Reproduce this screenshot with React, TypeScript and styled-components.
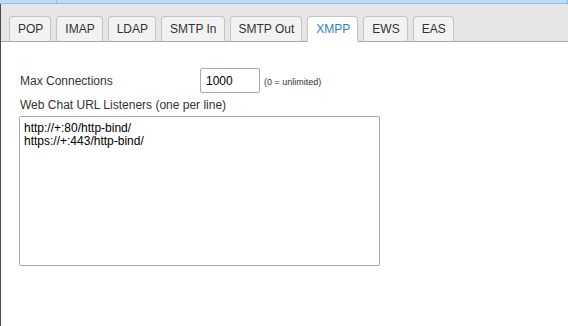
import styled, { createGlobalStyle } from "styled-components";

const GlobalStyle = createGlobalStyle`
  html, body {
    margin: 0;
    padding: 0;
    background: #ffffff;
    font-family: Arial, "Liberation Sans", sans-serif;
  }
`;

const Page = styled.div`
  width: 568px;
  height: 326px;
  display: flex;
  flex-direction: column;
  overflow: hidden;
`;

const TopStrip = styled.div`
  height: 3px;
  display: flex;
  background: #b9dcf8;
  border-bottom: 1px solid #8fc0ea;
`;

const StripCell = styled.div<{ $width?: number }>`
  width: ${(p) => (p.$width ? `${p.$width}px` : "auto")};
  flex: ${(p) => (p.$width ? "none" : "1")};
  border-right: 1px solid #8fc0ea;
`;

const Body = styled.div`
  flex: 1;
  display: flex;
  flex-direction: column;
  border-left: 1px solid #4a4a4a;
`;

const TabBar = styled.div`
  height: 37px;
  display: flex;
  align-items: flex-end;
  gap: 5px;
  padding-left: 8px;
  background: #e6e6e6;
  border-bottom: 1px solid #a6a6a6;
`;

const Tab = styled.div<{ $active?: boolean }>`
  height: 24px;
  display: flex;
  align-items: center;
  padding: 0 7px 0 8px;
  margin-bottom: -1px;
  font-size: 12px;
  color: ${(p) => (p.$active ? "#2b7fd2" : "#333333")};
  background: ${(p) => (p.$active ? "#ffffff" : "#f2f2f2")};
  border: 1px solid #c4c4c4;
  border-bottom: 1px solid ${(p) => (p.$active ? "#ffffff" : "#a6a6a6")};
  border-radius: 4px 4px 0 0;
`;

const Content = styled.div`
  display: flex;
  flex-direction: column;
  padding: 26px 0 0 18px;
`;

const Row = styled.div`
  display: flex;
  align-items: center;
  height: 25px;
`;

const Label = styled.label`
  width: 180px;
  padding-left: 1px;
  font-size: 12px;
  color: #333333;
`;

const NumberInput = styled.input`
  box-sizing: border-box;
  width: 60px;
  height: 25px;
  padding: 0 5px;
  border: 1px solid #a9a9a9;
  border-radius: 2px;
  font-family: Arial, "Liberation Sans", sans-serif;
  font-size: 12px;
  color: #000000;
`;

const Hint = styled.span`
  margin-left: 4px;
  padding-top: 3px;
  font-size: 9px;
  color: #333333;
`;

const BlockLabel = styled.label`
  margin-top: 5px;
  padding-left: 1px;
  font-size: 12px;
  color: #333333;
  line-height: 14px;
`;

const Listeners = styled.textarea`
  box-sizing: border-box;
  width: 361px;
  height: 150px;
  margin-top: 4px;
  padding: 5px 4px;
  border: 1px solid #a9a9a9;
  border-radius: 2px;
  resize: none;
  font-family: Arial, "Liberation Sans", sans-serif;
  font-size: 12px;
  line-height: 13px;
  color: #000000;
`;

const tabs = ["POP", "IMAP", "LDAP", "SMTP In", "SMTP Out", "XMPP", "EWS", "EAS"];

export default function App() {
  return (
    <Page>
      <GlobalStyle />
      <TopStrip>
        <StripCell $width={56} />
        <StripCell />
      </TopStrip>
      <Body>
        <TabBar>
          {tabs.map((t) => (
            <Tab key={t} $active={t === "XMPP"}>
              {t}
            </Tab>
          ))}
        </TabBar>
        <Content>
          <Row>
            <Label>Max Connections</Label>
            <NumberInput defaultValue="1000" />
            <Hint>(0 = unlimited)</Hint>
          </Row>
          <BlockLabel>Web Chat URL Listeners (one per line)</BlockLabel>
          <Listeners
            defaultValue={"http://+:80/http-bind/\nhttps://+:443/http-bind/"}
          />
        </Content>
      </Body>
    </Page>
  );
}
